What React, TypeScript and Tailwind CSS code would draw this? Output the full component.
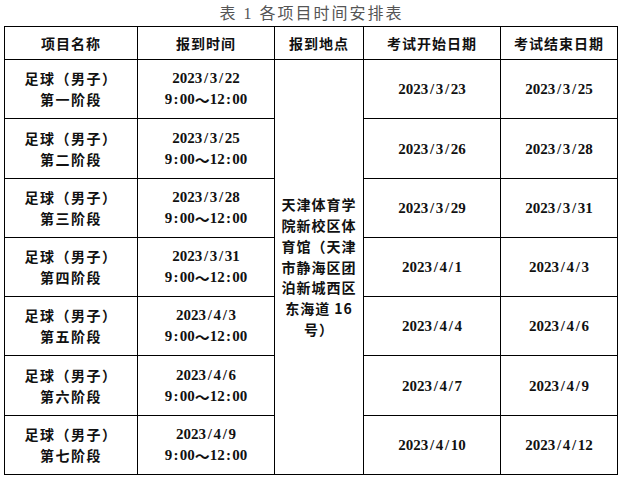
import React from 'react';

const rows = [
  { n: '一', date: '2023/3/22', start: '2023/3/23', end: '2023/3/25', h: 'h-[59px]' },
  { n: '二', date: '2023/3/25', start: '2023/3/26', end: '2023/3/28', h: 'h-[60px]' },
  { n: '三', date: '2023/3/28', start: '2023/3/29', end: '2023/3/31', h: 'h-[59px]' },
  { n: '四', date: '2023/3/31', start: '2023/4/1', end: '2023/4/3', h: 'h-[59px]' },
  { n: '五', date: '2023/4/3', start: '2023/4/4', end: '2023/4/6', h: 'h-[59px]' },
  { n: '六', date: '2023/4/6', start: '2023/4/7', end: '2023/4/9', h: 'h-[60px]' },
  { n: '七', date: '2023/4/9', start: '2023/4/10', end: '2023/4/12', h: 'h-[59px]' },
];

const place = ['天津体育学', '院新校区体', '育馆（天津', '市静海区团', '泊新城西区', '东海道 16', '号）'];

// SimSun-like half-width punctuation: give "/" and ":" the width of a digit
const Num: React.FC<{ text: string }> = ({ text }) => (
  <span className="font-['Liberation_Serif','Noto_Sans_CJK_SC',serif] font-bold">
    {text.split('').map((c, i) =>
      c === '/' || c === ':' ? (
        <span key={i} className="inline-block w-[7.5px] text-center">{c}</span>
      ) : (
        <React.Fragment key={i}>{c}</React.Fragment>
      )
    )}
  </span>
);

const cell = 'border border-black text-center align-middle p-0';
const cjk = "font-['Noto_Sans_CJK_SC',sans-serif] font-semibold";
const line = 'h-[21px] flex items-center justify-center';

export default function App() {
  return (
    <div className="w-[623px] h-[478px] bg-white text-[#111] text-[15px] leading-[21px]">
      <div className="h-[26px] flex items-center justify-center font-['Liberation_Serif','Noto_Sans_CJK_SC',serif] text-[16px] text-[#555] tracking-[2px]">
        表 1 各项目时间安排表
      </div>
      <table className="ml-[4px] w-[613px] border-collapse table-fixed">
        <colgroup>
          <col className="w-[133px]" />
          <col className="w-[137px]" />
          <col className="w-[89px]" />
          <col className="w-[137px]" />
          <col className="w-[117px]" />
        </colgroup>
        <thead>
          <tr className="h-[33px]">
            {['项目名称', '报到时间', '报到地点', '考试开始日期', '考试结束日期'].map(t => (
              <th key={t} className={`${cell} ${cjk} text-[14px] tracking-[1px]`}>{t}</th>
            ))}
          </tr>
        </thead>
        <tbody>
          {rows.map((r, i) => (
            <tr key={r.n} className={r.h}>
              <td className={`${cell} ${cjk} text-[14px] tracking-[1.5px]`}>
                <div className={line}>足球（男子）</div>
                <div className={line}>第{r.n}阶段</div>
              </td>
              <td className={cell}>
                <div className={line}><Num text={r.date} /></div>
                <div className={line}>
                  <Num text="9:00" />
                  <span className="font-['Noto_Sans_CJK_SC',sans-serif] font-semibold">～</span>
                  <Num text="12:00" />
                </div>
              </td>
              {i === 0 && (
                <td rowSpan={7} className={`${cell} ${cjk} text-[14px] tracking-[1px]`}>
                  {place.map(l => (
                    <div key={l} className="h-[20.7px] flex items-center justify-center">{l}</div>
                  ))}
                </td>
              )}
              <td className={cell}><Num text={r.start} /></td>
              <td className={cell}><Num text={r.end} /></td>
            </tr>
          ))}
        </tbody>
      </table>
    </div>
  );
}
